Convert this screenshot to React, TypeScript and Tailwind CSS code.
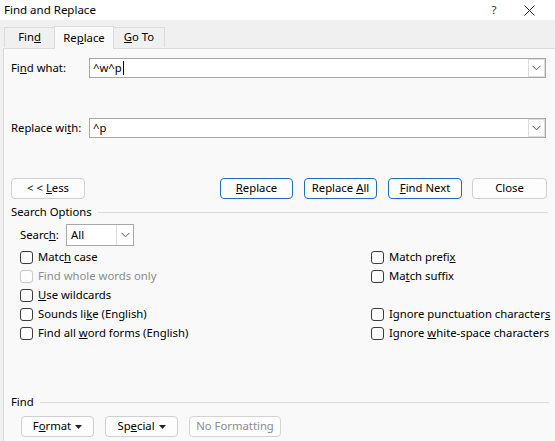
import { ReactNode } from 'react';

function Chevron({ className = '' }: { className?: string }) {
  return (
    <svg width="9" height="6" viewBox="0 0 9 6" className={className}>
      <path d="M0.5 0.8 L4.5 4.8 L8.5 0.8" fill="none" stroke="#555" strokeWidth="1" />
    </svg>
  );
}

function Combo({ value, caret }: { value: ReactNode; caret?: boolean }) {
  return (
    <div className="w-[457px] h-[20px] bg-white border border-[#a8a8a8] flex items-stretch">
      <div className="flex-1 flex items-center pl-[3px] leading-none">
        {value}
        {caret && <span className="w-px h-[14px] bg-black ml-px" />}
      </div>
      <div className="w-[17px] border border-[#dcdcdc] bg-white flex items-center justify-center">
        <Chevron />
      </div>
    </div>
  );
}

function Btn({
  children,
  w,
  tone = 'plain',
}: {
  children: ReactNode;
  w: string;
  tone?: 'plain' | 'blue' | 'off';
}) {
  return (
    <div
      className={
        'h-[21px] rounded-[4px] bg-[#fdfdfd] flex items-center justify-center whitespace-nowrap border ' +
        w +
        ' ' +
        (tone === 'blue'
          ? 'border-[#1d6fbf] text-black'
          : tone === 'off'
          ? 'border-[#d4d4d4] text-[#8c8c8c]'
          : 'border-[#d0d0d0] text-black')
      }
    >
      {children}
    </div>
  );
}

function Check({ children, off }: { children: ReactNode; off?: boolean }) {
  return (
    <div className="h-[19px] flex items-center gap-[5px] whitespace-nowrap">
      <span
        className={
          'w-[13px] h-[13px] shrink-0 rounded-[3px] border bg-[#fdfdfd] ' +
          (off ? 'border-[#c8c8c8]' : 'border-[#3c3c3c]')
        }
      />
      <span className={off ? 'text-[#8d8d8d]' : 'text-black'}>{children}</span>
    </div>
  );
}

function Caret() {
  return (
    <svg width="7" height="4" viewBox="0 0 7 4" className="ml-[4px]">
      <path d="M0 0 H7 L3.5 4 Z" fill="#222" />
    </svg>
  );
}

export default function App() {
  return (
    <div
      className="w-[555px] h-[441px] overflow-hidden bg-[#f0f0f0] flex flex-col text-black text-[11.3px]"
      style={{ fontFamily: '"Noto Sans", "Open Sans", sans-serif' }}
    >
      {/* Title bar */}
      <div className="h-[20px] bg-white flex items-center text-[11.5px] shrink-0">
        <span className="pl-[4px]">Find and Replace</span>
        <span className="ml-auto w-[10px] text-center text-[#333]">?</span>
        <svg width="11" height="11" viewBox="0 0 11 11" className="ml-[25px] mr-[20px]">
          <path d="M0.5 0.5 L10.5 10.5 M10.5 0.5 L0.5 10.5" stroke="#222" strokeWidth="1" />
        </svg>
      </div>

      {/* Tabs */}
      <div className="h-[28px] flex items-end pl-[4px] shrink-0">
        <div className="w-[51px] h-[20px] border border-b-0 border-[#dcdcdc] flex items-center justify-center bg-[#f0f0f0] mb-px">
          Fin<u>d</u>
        </div>
        <div className="w-[60px] h-[23px] border border-b-0 border-[#dcdcdc] bg-[#f9f9f9] flex items-center justify-center relative top-px z-10 -ml-px">
          Re<u>p</u>lace
        </div>
        <div className="w-[51px] h-[20px] border border-b-0 border-l-0 border-[#dcdcdc] flex items-center justify-center bg-[#f0f0f0] mb-px">
          <u>G</u>o To
        </div>
      </div>

      {/* Panel */}
      <div className="flex-1 ml-[3px] border-l border-t border-[#dcdcdc] bg-[#f9f9f9] flex flex-col">
        <div className="mt-[9px] flex items-center">
          <span className="w-[85px] pl-[7px]">
            Fi<u>n</u>d what:
          </span>
          <Combo value="^w^p" caret />
        </div>

        <div className="mt-[40px] flex items-center">
          <span className="w-[85px] pl-[7px]">
            Replace wi<u>t</u>h:
          </span>
          <Combo value="^p" />
        </div>

        <div className="mt-[40px] flex items-center pl-[7px]">
          <Btn w="w-[74px]">
            &lt; &lt; <u className="ml-[3px]">L</u>ess
          </Btn>
          <div className="ml-[135px]">
            <Btn w="w-[73px]" tone="blue">
              <u>R</u>eplace
            </Btn>
          </div>
          <div className="ml-[11px]">
            <Btn w="w-[73px]" tone="blue">
              Replace <u className="ml-[3px]">A</u>ll
            </Btn>
          </div>
          <div className="ml-[11px]">
            <Btn w="w-[74px]" tone="blue">
              <u>F</u>ind Next
            </Btn>
          </div>
          <div className="ml-[10px]">
            <Btn w="w-[75px]">Close</Btn>
          </div>
        </div>

        <div className="mt-[3px] flex items-center pl-[7px] h-[20px]">
          <span className="whitespace-nowrap">Search Options</span>
          <div className="w-[450px] h-px bg-[#dcdcdc] ml-[6px]" />
        </div>

        <div className="mt-[2px] flex items-center pl-[16px]">
          <span className="w-[46px]">
            Searc<u>h</u>:
          </span>
          <div className="w-[68px] h-[22px] bg-white border border-[#a8a8a8] flex items-stretch">
            <span className="flex-1 flex items-center pl-[4px]">All</span>
            <div className="w-[17px] border-l border-[#dcdcdc] flex items-center justify-center">
              <Chevron />
            </div>
          </div>
        </div>

        <div className="mt-[2px] flex pl-[16px]">
          <div className="w-[351px] flex flex-col">
            <Check>
              Matc<u>h</u> case
            </Check>
            <Check off>Find whole words only</Check>
            <Check>
              <u>U</u>se wildcards
            </Check>
            <Check>
              Sounds li<u>k</u>e (English)
            </Check>
            <Check>
              Find all <u>w</u>ord forms (English)
            </Check>
          </div>
          <div className="flex flex-col">
            <Check>
              Match prefi<u>x</u>
            </Check>
            <Check>
              Ma<u>t</u>ch suffix
            </Check>
            <div className="h-[19px]" />
            <Check>
              Ignore punctuation character<u>s</u>
            </Check>
            <Check>
              Ignore <u>w</u>hite-space characters
            </Check>
          </div>
        </div>

        <div className="mt-[49px] flex items-center pl-[7px] h-[20px]">
          <span>Find</span>
          <div className="w-[509px] h-px bg-[#dcdcdc] ml-[6px]" />
        </div>

        <div className="mt-[4px] flex items-center pl-[17px] gap-[11px]">
          <Btn w="w-[73px]">
            F<u>o</u>rmat
            <Caret />
          </Btn>
          <Btn w="w-[73px]">
            Sp<u>e</u>cial
            <Caret />
          </Btn>
          <Btn w="w-[92px]" tone="off">
            No Formatting
          </Btn>
        </div>
      </div>
    </div>
  );
}
